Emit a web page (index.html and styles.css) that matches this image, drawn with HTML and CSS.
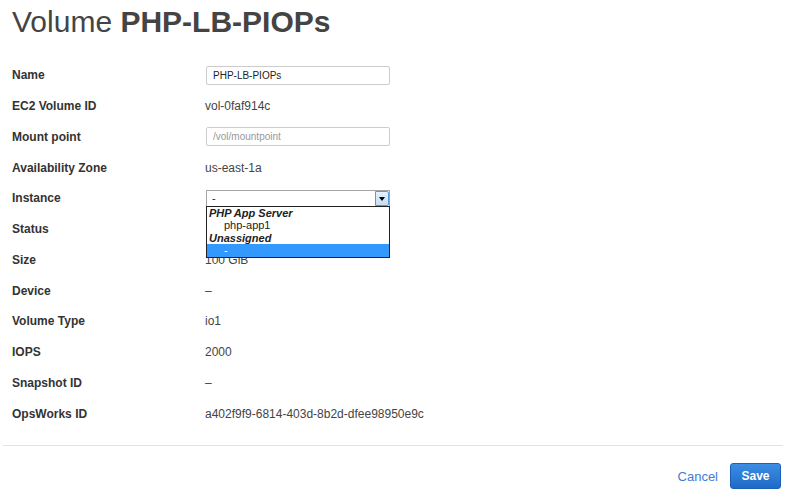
FILE: index.html
```html
<!DOCTYPE html>
<html lang="en">
<head>
  <meta charset="UTF-8" />
  <title>Volume PHP-LB-PIOPs</title>
  <link rel="stylesheet" href="styles.css">
</head>
<body>
  <div class="page">
    <h1>Volume <strong>PHP-LB-PIOPs</strong></h1>

    <div class="details">
      <div class="row">
        <div class="label">Name</div>
        <div class="value"><input class="text-input" type="text" value="PHP-LB-PIOPs"></div>
      </div>
      <div class="row">
        <div class="label">EC2 Volume ID</div>
        <div class="value">vol-0faf914c</div>
      </div>
      <div class="row">
        <div class="label">Mount point</div>
        <div class="value"><input class="text-input" type="text" placeholder="/vol/mountpoint"></div>
      </div>
      <div class="row">
        <div class="label">Availability Zone</div>
        <div class="value">us-east-1a</div>
      </div>
      <div class="row">
        <div class="label">Instance</div>
        <div class="value">
          <!-- select shown with its list open -->
          <div class="select">
            <span class="select-text">-</span>
            <span class="select-arrow"></span>
            <div class="select-list">
              <div class="opt-group">PHP App Server</div>
              <div class="opt">php-app1</div>
              <div class="opt-group">Unassigned</div>
              <div class="opt selected">-</div>
            </div>
          </div>
        </div>
      </div>
      <div class="row">
        <div class="label">Status</div>
        <div class="value"></div>
      </div>
      <div class="row">
        <div class="label">Size</div>
        <div class="value">100 GiB</div>
      </div>
      <div class="row">
        <div class="label">Device</div>
        <div class="value">&ndash;</div>
      </div>
      <div class="row">
        <div class="label">Volume Type</div>
        <div class="value">io1</div>
      </div>
      <div class="row">
        <div class="label">IOPS</div>
        <div class="value">2000</div>
      </div>
      <div class="row">
        <div class="label">Snapshot ID</div>
        <div class="value">&ndash;</div>
      </div>
      <div class="row">
        <div class="label">OpsWorks ID</div>
        <div class="value">a402f9f9-6814-403d-8b2d-dfee98950e9c</div>
      </div>
    </div>

    <div class="footer">
      <a href="#" class="cancel">Cancel</a>
      <button class="save">Save</button>
    </div>
  </div>
</body>
</html>
```

FILE: styles.css
```css
* {
  box-sizing: border-box;
}
body {
  margin: 0;
  background: #fff;
  font-family: 'Liberation Sans', Arial, sans-serif;
  color: #444;
}
.page {
  width: 780px;
  margin-left: 3px;
}
h1 {
  margin: 0;
  padding: 5px 9px 0;
  font-size: 30px;
  line-height: 33px;
  font-weight: normal;
  color: #444;
}
h1 strong {
  font-weight: bold;
}
.details {
  margin-top: 22px;
}
.row {
  display: grid;
  grid-template-columns: 193px 1fr;
  align-items: center;
  height: 30.75px;
  padding-left: 9px;
}
.label {
  font-size: 12px;
  font-weight: bold;
  color: #333;
}
.value {
  font-size: 12px;
  color: #444;
}
.text-input {
  display: block;
  width: 184px;
  height: 19px;
  margin-left: 1px;
  padding: 0 6px;
  border: 1px solid #ccc;
  border-radius: 2px;
  font-family: inherit;
  font-size: 10px;
  color: #222;
  outline: none;
}
.text-input::placeholder {
  color: #999;
}
.select {
  position: relative;
  width: 184px;
  height: 17px;
  margin-left: 1px;
  border: 1px solid #a5a5a5;
  border-bottom-color: #7eb4ea;
  background: #fff;
}
.select-text {
  display: block;
  padding-left: 5px;
  font-size: 11px;
  line-height: 14px;
  color: #222;
}
.select-arrow {
  position: absolute;
  top: 0;
  right: 0;
  width: 14px;
  height: 15px;
  border: 1px solid #5b9ad9;
  border-radius: 0 2px 2px 0;
  background: linear-gradient(#e6f1fb, #c6def6);
}
.select-arrow::after {
  content: "";
  position: absolute;
  left: 3px;
  top: 5px;
  border-left: 3.5px solid transparent;
  border-right: 3.5px solid transparent;
  border-top: 4px solid #000;
}
.select-list {
  position: absolute;
  top: 15px;
  left: -1px;
  width: 184px;
  border: 1px solid #222;
  background: #fff;
  font-size: 11px;
  color: #222;
}
.opt-group {
  height: 12.5px;
  line-height: 12.5px;
  padding-left: 2px;
  font-weight: bold;
  font-style: italic;
}
.opt {
  height: 12.5px;
  line-height: 12.5px;
  padding-left: 17px;
}
.opt.selected {
  background: #3399ff;
  color: #fff;
  height: 13px;
}
.footer {
  margin-top: 16px;
  border-top: 1px solid #e3e3e3;
  padding-top: 17px;
  padding-right: 2px;
  display: flex;
  justify-content: flex-end;
  align-items: center;
  gap: 12px;
}
.cancel {
  font-size: 13px;
  color: #3b7dd8;
  text-decoration: none;
}
.save {
  width: 51px;
  height: 26px;
  border: 1px solid #1b5fb8;
  border-radius: 3px;
  background: linear-gradient(#3c8ee5, #1e6ac6);
  color: #fff;
  font-family: inherit;
  font-size: 12px;
  font-weight: bold;
  cursor: pointer;
}
```
